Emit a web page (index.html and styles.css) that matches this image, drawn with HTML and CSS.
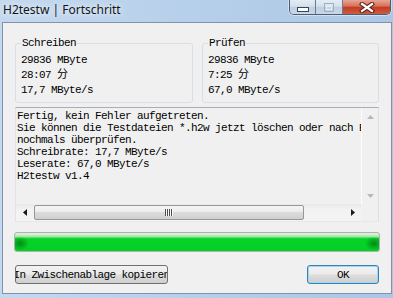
FILE: index.html
```html
<!DOCTYPE html>
<html>
<head>
<meta charset="utf-8">
<link rel="stylesheet" href="styles.css">
</head>
<body>
<div class="window">
  <div class="titlebar">
    <span class="title">H2testw | Fortschritt</span>
    <div class="caption">
      <div class="cbtn min"><svg width="12" height="5" viewBox="0 0 12 5"><rect x="0.5" y="0.5" width="11" height="4" fill="#fff" stroke="#34465c"/></svg></div>
      <div class="cbtn max"><svg width="10" height="9" viewBox="0 0 10 9"><rect x="0.5" y="0.5" width="9" height="8" fill="none" stroke="#9fb0c4"/><rect x="2.5" y="3.5" width="5" height="3" fill="none" stroke="#e6edf5"/><rect x="1.5" y="1.5" width="7" height="1" fill="#e6edf5"/></svg></div>
      <div class="cbtn close"><svg width="16" height="11" viewBox="0 0 16 11"><path d="M3 2 L13 9 M13 2 L3 9" stroke="#5a2218" stroke-width="4.4" stroke-linecap="square"/><path d="M3 2 L13 9 M13 2 L3 9" stroke="#fff" stroke-width="2.2" stroke-linecap="square"/></svg></div>
    </div>
  </div>
  <div class="client">
    <div class="groups">
      <fieldset class="group">
        <legend>Schreiben</legend>
        <div class="lines">
          <div class="line">29836 MByte</div>
          <div class="line">28:07 分</div>
          <div class="line">17,7 MByte/s</div>
        </div>
      </fieldset>
      <fieldset class="group">
        <legend>Prüfen</legend>
        <div class="lines">
          <div class="line">29836 MByte</div>
          <div class="line">7:25 分</div>
          <div class="line">67,0 MByte/s</div>
        </div>
      </fieldset>
    </div>
    <div class="memo">
      <div class="memo-text">Fertig, kein Fehler aufgetreten.
Sie können die Testdateien *.h2w jetzt löschen oder nach Belieben
nochmals überprüfen.
Schreibrate: 17,7 MByte/s
Leserate: 67,0 MByte/s
H2testw v1.4</div>
      <div class="vscroll">
        <div class="sbtn"><svg width="7" height="4" viewBox="0 0 7 4"><path d="M0 4 L3.5 0 L7 4 Z" fill="#b8b8b8"/></svg></div>
        <div class="sbtn"><svg width="7" height="4" viewBox="0 0 7 4"><path d="M0 0 L3.5 4 L7 0 Z" fill="#b8b8b8"/></svg></div>
      </div>
      <div class="hscroll">
        <div class="sbtn"><svg width="4" height="7" viewBox="0 0 4 7"><path d="M4 0 L0 3.5 L4 7 Z" fill="#1a1a1a"/></svg></div>
        <div class="track">
          <div class="thumb"><svg width="8" height="7" viewBox="0 0 8 7"><path d="M0.5 0 V7 M2.5 0 V7 M4.5 0 V7 M6.5 0 V7" stroke="#4d4d4d"/><path d="M1.5 0 V7 M3.5 0 V7 M5.5 0 V7 M7.5 0 V7" stroke="#fafafa"/></svg></div>
        </div>
        <div class="sbtn"><svg width="4" height="7" viewBox="0 0 4 7"><path d="M0 0 L4 3.5 L0 7 Z" fill="#1a1a1a"/></svg></div>
      </div>
      <div class="corner"></div>
    </div>
    <div class="progress"></div>
    <div class="buttons">
      <button class="btn copy"><span>In Zwischenablage kopieren</span></button>
      <button class="btn ok"><span>OK</span></button>
    </div>
  </div>
</div>
</body>
</html>
```
FILE: styles.css
```css
html, body {
  margin: 0;
  padding: 0;
}
body {
  width: 393px;
  height: 298px;
  overflow: hidden;
}
.window {
  width: 393px;
  height: 298px;
  background: linear-gradient(90deg, #c4d9ef 0%, #b6cfea 50%, #abc7e5 100%);
  display: flex;
  flex-direction: column;
}
.titlebar {
  height: 22px;
  display: flex;
  justify-content: space-between;
  align-items: flex-start;
}
.title {
  font: 12px "Noto Sans", sans-serif;
  line-height: 16px;
  padding: 2px 0 0 3px;
  color: #151515;
  text-shadow: 0 0 5px #e8f1fb, 0 0 8px #e8f1fb;
}
.caption {
  display: flex;
  margin-right: 2px;
  height: 15px;
  box-sizing: border-box;
  border: 1px solid #4d5e74;
  border-top: 0;
  border-radius: 0 0 5px 5px;
  overflow: hidden;
  box-shadow: 0 1px 0 rgba(255,255,255,0.45), 1px 0 0 rgba(255,255,255,0.4), -1px 0 0 rgba(255,255,255,0.4);
}
.cbtn {
  display: flex;
  justify-content: center;
  align-items: center;
}
.min, .max {
  background: linear-gradient(#e4ecf5 0%, #d5e0ec 45%, #bfcfe1 50%, #c9d8e8 100%);
  border-right: 1px solid #6a7c93;
}
.min {
  width: 26px;
  align-items: flex-end;
  padding-bottom: 2px;
  box-sizing: border-box;
}
.max {
  width: 26px;
}
.close {
  width: 47px;
  background: linear-gradient(#e7a596 0%, #d66f57 45%, #c33a20 50%, #d05b40 100%);
}
.client {
  margin: 0 1px 4px 2px;
  height: 272px;
  box-sizing: border-box;
  border: 1px solid #8093aa;
  background: #f0f0f0;
  padding: 14px 12px 9px;
  display: flex;
  flex-direction: column;
  font: 11px "Liberation Mono", "Noto Sans CJK SC", monospace;
  letter-spacing: -0.6px;
  color: #000;
}
.groups {
  display: grid;
  grid-template-columns: 178px 177px;
  column-gap: 9px;
}
.group {
  margin: 0;
  padding: 0 5px 4px;
  min-width: 0;
  border: 1px solid #d5dfe5;
  border-radius: 3px;
}
.group legend {
  padding: 0 1px;
  line-height: 12px;
}
.lines {
  padding-top: 4px;
}
.line {
  line-height: 15px;
  white-space: nowrap;
}
.memo {
  margin-top: 4px;
  height: 115px;
  box-sizing: border-box;
  border: 1px solid;
  border-color: #abadb3 #dbdfe6 #e3e9ef #e2e3ea;
  display: grid;
  grid-template-columns: minmax(0, 1fr) 17px;
  grid-template-rows: minmax(0, 1fr) 17px;
}
.memo-text {
  padding: 2px 0 0 1px;
  line-height: 12px;
  white-space: pre;
  overflow: hidden;
}
.vscroll {
  display: flex;
  flex-direction: column;
  justify-content: space-between;
  border-left: 1px solid #fbfbfb;
  background: #f0f0f0;
}
.sbtn {
  width: 17px;
  height: 17px;
  display: flex;
  align-items: center;
  justify-content: center;
  flex: none;
}
.vscroll .sbtn {
  width: 16px;
}
.hscroll {
  display: flex;
  background: linear-gradient(#e9e9e9, #f2f2f2 30%, #f4f4f4);
}
.track {
  flex: 1;
  display: flex;
  padding: 1px 0 1px 1px;
}
.thumb {
  width: 270px;
  box-sizing: border-box;
  border: 1px solid #979797;
  border-radius: 2px;
  background: linear-gradient(#f5f5f5 0%, #ececec 45%, #dcdcdc 50%, #cfcfcf 100%);
  display: flex;
  align-items: center;
  justify-content: center;
}
.corner {
  background: #f0f0f0;
}
.progress {
  margin: 10px -1px 0;
  height: 20px;
  box-sizing: border-box;
  border: 1px solid #b0b0b0;
  border-radius: 3px;
  background:
    radial-gradient(ellipse 9px 7px at 5px 58%, rgba(0,90,10,0.6), rgba(0,90,10,0) 100%),
    radial-gradient(ellipse 9px 7px at calc(100% - 5px) 58%, rgba(0,90,10,0.6), rgba(0,90,10,0) 100%),
    linear-gradient(#e4efe4 0px, #c8f0c8 2px, #8fe696 4px, #30d84a 5px, #06d227 6px, #04cf25 100%);
}
.buttons {
  margin-top: 13px;
  display: flex;
  justify-content: space-between;
}
.btn {
  height: 19px;
  box-sizing: border-box;
  border: 1px solid #707070;
  border-radius: 3px;
  background: linear-gradient(#f2f2f2 0%, #ebebeb 48%, #dddddd 52%, #cfcfcf 100%);
  font: inherit;
  letter-spacing: inherit;
  color: #000;
  padding: 0;
  margin: 0;
  display: flex;
  align-items: center;
  justify-content: center;
  overflow: hidden;
  white-space: nowrap;
}
.copy {
  width: 153px;
}
.ok {
  width: 72px;
  border-color: #3c7fb1;
  box-shadow: inset 0 0 0 1px #9ad9f5;
}
```
